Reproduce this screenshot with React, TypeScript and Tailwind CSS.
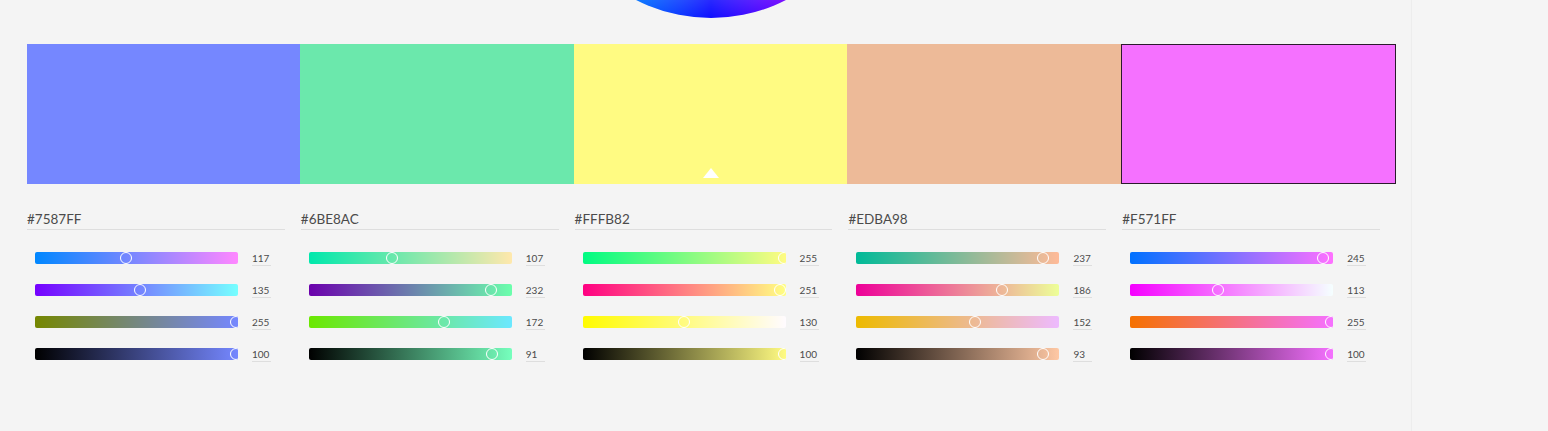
import React from "react";

type Swatch = { hex: string };

const swatches: Swatch[] = [
  { hex: "#7587FF" },
  { hex: "#6BE8AC" },
  { hex: "#FFFB82" },
  { hex: "#EDBA98" },
  { hex: "#F571FF" },
];

const SELECTED = 4;
const ACTIVE = 2;

function toRgb(hex: string) {
  const n = parseInt(hex.slice(1), 16);
  return [(n >> 16) & 255, (n >> 8) & 255, n & 255];
}

const css = (c: number[]) => `rgb(${c.map((v) => Math.round(v)).join(",")})`;

function sliderRows(hex: string) {
  const [r, g, b] = toRgb(hex);
  const max = Math.max(r, g, b) || 1;
  const full = [r, g, b].map((v) => (v * 255) / max);
  const bright = Math.round((max / 255) * 100);
  return [
    { value: r, ratio: r / 255, from: [0, g, b], to: [255, g, b] },
    { value: g, ratio: g / 255, from: [r, 0, b], to: [r, 255, b] },
    { value: b, ratio: b / 255, from: [r, g, 0], to: [r, g, 255] },
    { value: bright, ratio: bright / 100, from: [0, 0, 0], to: full },
  ];
}

const TRACK = 203;

function Slider({ value, ratio, from, to }: { value: number; ratio: number; from: number[]; to: number[] }) {
  return (
    <div className="flex h-3 items-start gap-[14px]">
      <div
        className="relative h-3 w-[203px] overflow-hidden rounded-[2px]"
        style={{ background: `linear-gradient(to right, ${css(from)}, ${css(to)})` }}
      >
        <span
          className="absolute top-0 size-3 rounded-full border-[1.5px] border-white"
          style={{ left: ratio * TRACK - 8 }}
        />
      </div>
      <span className="w-[19px] border-b border-[#dedede] text-[10px] leading-[13px] text-[#4b4b4b]">
        {value}
      </span>
    </div>
  );
}

export default function App() {
  return (
    <div
      className="flex h-[431px] w-[1548px] overflow-hidden bg-[#f4f4f4]"
      style={{ fontFamily: "Lato, 'Open Sans', sans-serif" }}
    >
      <main className="flex w-[1411px] flex-col pl-[27px] pr-[15px]">
        <div className="relative mx-auto -mt-[312px] size-[330px] shrink-0 translate-x-[-1px]">
          <div
            className="absolute inset-0 rounded-full"
            style={{
              background:
                "conic-gradient(from 0deg, hsl(60 100% 50%), hsl(0 100% 50%) 60deg, hsl(300 100% 50%) 120deg, hsl(240 100% 50%) 180deg, hsl(180 100% 50%) 240deg, hsl(120 100% 50%) 300deg, hsl(60 100% 50%))",
            }}
          />
          <div
            className="absolute inset-0 rounded-full"
            style={{ background: "radial-gradient(circle, #fff 0%, rgba(255,255,255,0) 75%)" }}
          />
        </div>

        <div className="mt-[26px] flex h-[140px]">
          {swatches.map((s, i) => (
            <div
              key={s.hex}
              className={`relative flex flex-1 items-end justify-center ${i === SELECTED ? "border border-[#2b1a2d]" : ""}`}
              style={{ backgroundColor: s.hex }}
            >
              {i === ACTIVE && (
                <span className="mb-[6px] h-0 w-0 border-x-[8px] border-b-[10px] border-x-transparent border-b-white" />
              )}
            </div>
          ))}
        </div>

        <div className="mt-[27px] flex">
          {swatches.map((s) => (
            <div key={s.hex} className="flex-1 pr-[16px]">
              <div className="border-b border-[#dedede] pb-[2px] text-[13.5px] leading-[16px] text-[#4b4b4b]">
                {s.hex}
              </div>
              <div className="mt-[22px] flex flex-col gap-5 pl-2">
                {sliderRows(s.hex).map((row, k) => (
                  <Slider key={k} {...row} />
                ))}
              </div>
            </div>
          ))}
        </div>
      </main>
      <aside className="flex-1 border-l border-[#ededed] bg-[#f5f5f5]" />
    </div>
  );
}
